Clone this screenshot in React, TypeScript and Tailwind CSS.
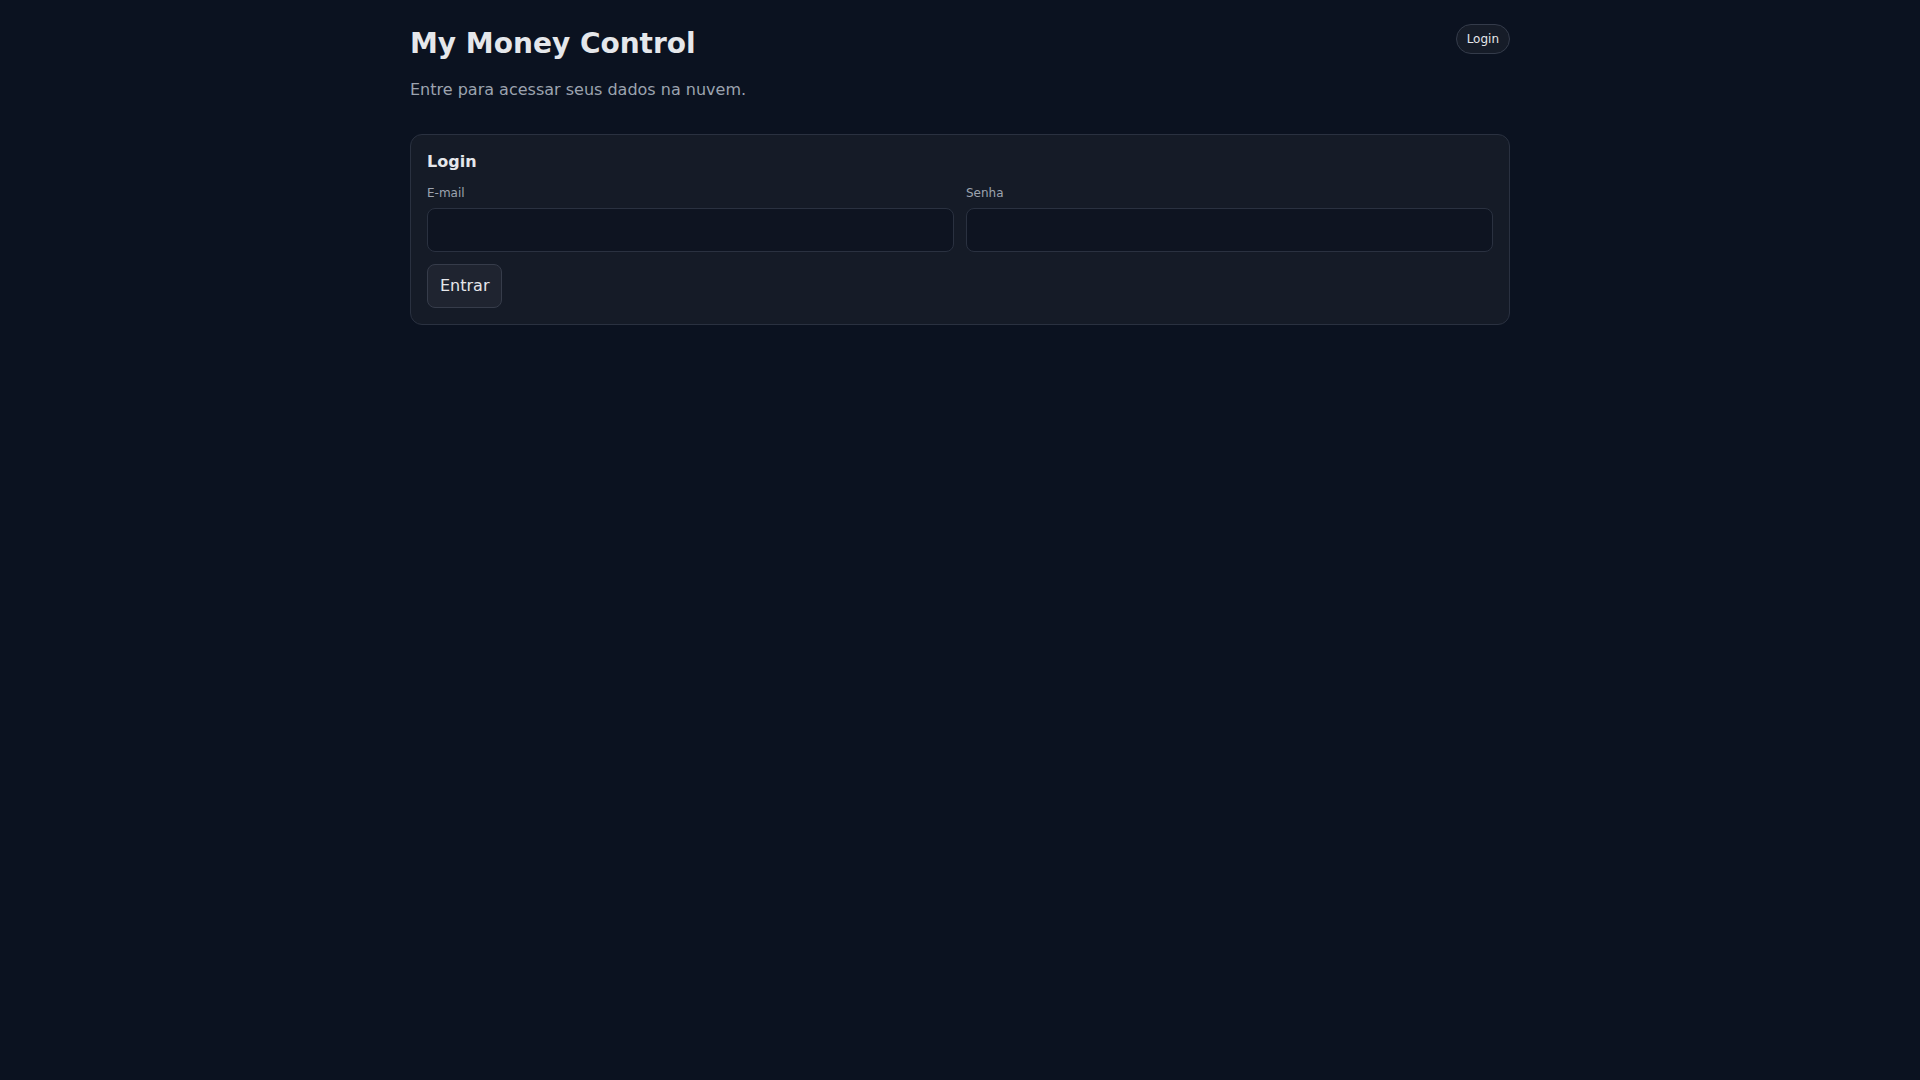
export default function App() {
  return (
    <div
      className="min-h-screen bg-[#0b1220] text-[#e5e7eb]"
      style={{ fontFamily: '"DejaVu Sans", sans-serif' }}
    >
      <div className="mx-auto max-w-[1100px] pt-6">
        <header className="flex items-start justify-between">
          <div>
            <h1 className="text-[28px] font-bold leading-[40px] text-[#e5e7eb]">
              My Money Control
            </h1>
            <p className="mt-[14px] text-base leading-6 text-[#9ca3af]">
              Entre para acessar seus dados na nuvem.
            </p>
          </div>
          <button className="h-[30px] rounded-full border border-[#343b4a] bg-[#161c28] px-[10px] text-xs text-[#e5e7eb]">
            Login
          </button>
        </header>

        <section className="mt-8 rounded-xl border border-[#2a3140] bg-[#151b27] p-4">
          <h2 className="text-base font-bold leading-[22px] text-[#e5e7eb]">Login</h2>
          <div className="mt-3 grid grid-cols-2 gap-3">
            <label className="flex flex-col">
              <span className="text-xs leading-4 text-[#9ca3af]">E-mail</span>
              <input
                type="email"
                className="mt-[7px] h-11 rounded-lg border border-[#2a3140] bg-[#0e1421] px-3 text-base text-[#e5e7eb] outline-none"
              />
            </label>
            <label className="flex flex-col">
              <span className="text-xs leading-4 text-[#9ca3af]">Senha</span>
              <input
                type="password"
                className="mt-[7px] h-11 rounded-lg border border-[#2a3140] bg-[#0e1421] px-3 text-base text-[#e5e7eb] outline-none"
              />
            </label>
          </div>
          <button className="mt-3 h-11 rounded-lg border border-[#363c4a] bg-[#1f2430] px-3 text-base text-[#e5e7eb]">
            Entrar
          </button>
        </section>
      </div>
    </div>
  );
}
